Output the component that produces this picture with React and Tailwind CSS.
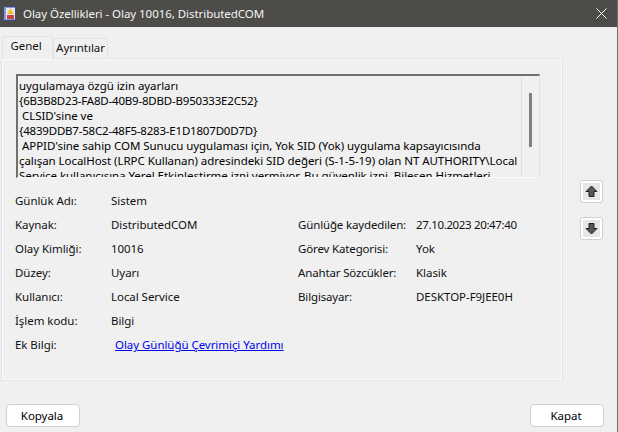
import React from 'react';

const leftFields = [
  ['Günlük Adı:', 'Sistem'],
  ['Kaynak:', 'DistributedCOM'],
  ['Olay Kimliği:', '10016'],
  ['Düzey:', 'Uyarı'],
  ['Kullanıcı:', 'Local Service'],
  ['İşlem kodu:', 'Bilgi'],
];

const rightFields = [
  ['Günlüğe kaydedilen:', '27.10.2023 20:47:40'],
  ['Görev Kategorisi:', 'Yok'],
  ['Anahtar Sözcükler:', 'Klasik'],
  ['Bilgisayar:', 'DESKTOP-F9JEE0H'],
];

const messageLines = [
  ['uygulamaya özgü izin ayarları', ''],
  ['{6B3B8D23-FA8D-40B9-8DBD-B950333E2C52}', 'tracking-[-0.2px]'],
  ['\u00a0CLSID\'sine ve', ''],
  ['{4839DDB7-58C2-48F5-8283-E1D1807D0D7D}', 'tracking-[-0.2px]'],
  ['\u00a0APPID\'sine sahip COM Sunucu uygulaması için, Yok SID (Yok) uygulama kapsayıcısında', ''],
  ['çalışan LocalHost (LRPC Kullanan) adresindeki SID değeri (S-1-5-19) olan NT AUTHORITY\\Local', ''],
  ['Service kullanıcısına Yerel Etkinleştirme izni vermiyor. Bu güvenlik izni, Bileşen Hizmetleri', ''],
];

const Arrow = ({ down }) => (
  <button className="w-[23px] h-[23px] bg-white border border-[#d0d0d0] rounded-[3px] flex items-center justify-center">
    <span className="w-[17px] h-[17px] bg-[#e6e6e6] flex items-center justify-center">
      <svg width="13" height="13" viewBox="0 0 13 13" className={down ? 'rotate-180' : ''}>
        <path d="M6.5 1 L12 6.5 L9 6.5 L9 11.5 L4 11.5 L4 6.5 L1 6.5 Z" fill="#555" stroke="#222" strokeWidth="1" />
      </svg>
    </span>
  </button>
);

const FootButton = ({ children }) => (
  <button className="w-[74px] h-[23px] bg-white border border-[#d0d0d0] rounded-[4px] text-black leading-[20px] pr-[2px]">
    {children}
  </button>
);

const Field = ({ label, value, labelClass, valueClass = '' }) => (
  <div className="flex h-[24px] items-center whitespace-nowrap">
    <span className={labelClass}>{label}</span>
    <span className={valueClass}>{value}</span>
  </div>
);

export default function App() {
  return (
    <div
      className="w-[618px] h-[432px] overflow-hidden flex flex-col bg-[#f0f0f0] border-r border-[#6e6e6e] text-[11.5px] tracking-[-0.05px] text-[#111]"
      style={{ fontFamily: '"Noto Sans", "Open Sans", sans-serif' }}
    >
      {/* başlık çubuğu */}
      <div className="h-[27px] shrink-0 bg-[#4d4c49] flex items-center text-white">
        <svg width="15" height="15" viewBox="0 0 15 15" className="ml-[2px] mr-[6px]">
          <rect x="1.5" y="0.5" width="12" height="14" fill="#8a9bc8" stroke="#3d4a80" />
          <rect x="4" y="2" width="9" height="11" fill="#e8e8ef" />
          <path d="M8.5 2.5 L12 8 L5 8 Z" fill="#f0c020" />
          <rect x="5" y="9" width="7" height="4" fill="#d04040" />
        </svg>
        <span className="text-[#f4f4f4] flex-1">Olay Özellikleri - Olay 10016, DistributedCOM</span>
        <svg width="11" height="11" viewBox="0 0 11 11" className="mr-[10px]">
          <path d="M0.5 0.5 L10.5 10.5 M10.5 0.5 L0.5 10.5" stroke="#fff" strokeWidth="1" fill="none" />
        </svg>
      </div>

      {/* sekmeler */}
      <div className="h-[31px] shrink-0 pl-[2px] flex items-end">
        <div className="w-[51px] h-[23px] bg-[#f0f0f0] border border-b-0 border-[#e4e4e4] text-center leading-[17px] pr-[3px] relative top-[1px] z-10">
          Genel
        </div>
        <div className="w-[55px] h-[20px] bg-[#f0f0f0] border border-b-0 border-[#e4e4e4] text-center leading-[18px]">
          Ayrıntılar
        </div>
      </div>

      <div className="flex h-[323px] shrink-0">
        {/* genel panel */}
        <div className="ml-[1px] w-[562px] h-full border border-[#e2e2e2] shadow-[inset_1px_1px_0_#fafafa,inset_-1px_-1px_0_#fafafa] pt-[15px] pl-[14px]">
          <div className="w-[524px] h-[104px] border-t-2 border-l-2 border-t-[#707070] border-l-[#707070] border-r border-b border-r-[#e0e0e0] border-b-[#fafafa] flex overflow-hidden">
            <div className="w-[503px] h-full overflow-hidden pl-[1px] pt-[2px] leading-[15px] text-black whitespace-nowrap">
              {messageLines.map(([line, extra], i) => (
                <div key={i} className={`h-[15px] ${extra}`}>{line}</div>
              ))}
            </div>
            <div className="flex-1 border-l border-[#e2e2e2] flex justify-center pt-[17px]">
              <div className="w-[3px] h-[54px] bg-[#808080]"></div>
            </div>
          </div>

          <div className="flex mt-[11px] -ml-[1px]">
            <div className="w-[283px]">
              {leftFields.map(([label, value]) => (
                <Field key={label} label={label} value={value} labelClass="w-[96px]" />
              ))}
            </div>
            <div className="pt-[24px]">
              {rightFields.map(([label, value]) => (
                <Field
                  key={label}
                  label={label}
                  value={value}
                  labelClass="w-[118px] tracking-[-0.15px]"
                  valueClass={label.startsWith('Günlüğe') ? 'tracking-[-0.35px]' : ''}
                />
              ))}
            </div>
          </div>

          <div className="flex h-[24px] items-center -ml-[1px]">
            <span className="w-[100px]">Ek Bilgi:</span>
            <a className="text-[#0000ee] underline">Olay Günlüğü Çevrimiçi Yardımı</a>
          </div>
        </div>

        {/* önceki/sonraki */}
        <div className="ml-[17px] pt-[122px] flex flex-col gap-[14px]">
          <Arrow />
          <Arrow down />
        </div>
      </div>

      <div className="flex justify-between pl-[6px] pr-[13px] mt-[23px]">
        <FootButton>Kopyala</FootButton>
        <FootButton>Kapat</FootButton>
      </div>
    </div>
  );
}
